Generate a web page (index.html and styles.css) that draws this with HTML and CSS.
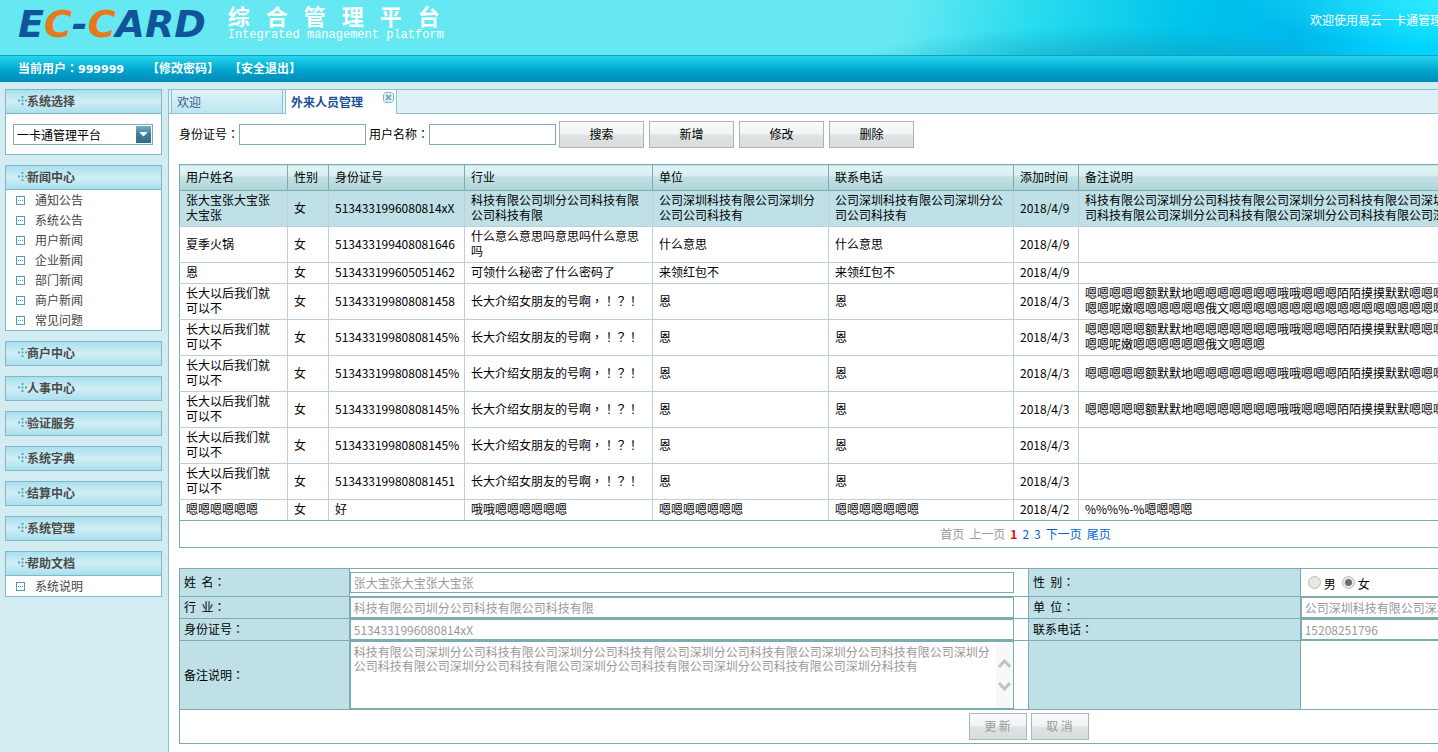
FILE: index.html
```
<!DOCTYPE html>
<html lang="zh-CN">
<head>
<meta charset="utf-8">
<title>综合管理平台</title>
<link rel="stylesheet" href="styles.css">
</head>
<body>
<svg class="defs" width="0" height="0" aria-hidden="true">
  <symbol id="dots" viewBox="0 0 9 9"><g fill="#5aa3b8"><rect x="3.500" y="0" width="2" height="2"/><rect x="3.500" y="3.500" width="2" height="2"/><rect x="3.500" y="7" width="2" height="2"/><rect x="0" y="3.500" width="2" height="2"/><rect x="7" y="3.500" width="2" height="2"/></g></symbol>
  <symbol id="leaf" viewBox="0 0 9 9"><rect x=".5" y=".5" width="8" height="8" fill="#fff" stroke="#4f9db5"/><path d="M2 4h1v1H2zM4 4h1v1H4zM6 4h1v1H6z" fill="#4f9db5"/></symbol>
</svg>
<div class="shell">
  <header class="banner">
    <div class="brand">
      <div class="logo"><span>E</span><span class="orange">C</span><span>-</span><span class="orange">C</span><span>ARD</span></div>
      <div class="product">
        <h1 class="product-name"><span>综</span><span>合</span><span>管</span><span>理</span><span>平</span><span>台</span></h1>
        <p class="product-sub">Integrated management platform</p>
      </div>
    </div>
    <div class="welcome">欢迎使用易云一卡通管理平台</div>
  </header>
  <nav class="userbar">
    <span class="user">当前用户<span class="tc" lang="zh-TW">：</span><span class="user-id">999999</span></span>
    <a href="#">【修改密码】</a>
    <a href="#">【安全退出】</a>
  </nav>
  <div class="layout">
    <aside class="side">
      <section class="panel">
        <h2 class="panel-title"><svg><use href="#dots"/></svg>系统选择</h2>
        <div class="picker">
          <div class="select-wrap">
            <select aria-label="系统选择"><option>一卡通管理平台</option></select>
            <svg class="arrow" width="15" height="17" viewBox="0 0 15 17"><defs><linearGradient id="ag" x2="0" y2="1"><stop offset="0" stop-color="#78adc0"/><stop offset=".5" stop-color="#3d7f9b"/><stop offset="1" stop-color="#2b6c8a"/></linearGradient></defs><rect width="15" height="17" fill="url(#ag)"/><path d="M4 6h7v1l-3.500 3.500L4 7z" fill="#fff"/></svg>
          </div>
        </div>
      </section>
      <section class="panel">
        <h2 class="panel-title"><svg><use href="#dots"/></svg>新闻中心</h2>
        <ul class="menu">
          <li><svg><use href="#leaf"/></svg><a href="#">通知公告</a></li>
          <li><svg><use href="#leaf"/></svg><a href="#">系统公告</a></li>
          <li><svg><use href="#leaf"/></svg><a href="#">用户新闻</a></li>
          <li><svg><use href="#leaf"/></svg><a href="#">企业新闻</a></li>
          <li><svg><use href="#leaf"/></svg><a href="#">部门新闻</a></li>
          <li><svg><use href="#leaf"/></svg><a href="#">商户新闻</a></li>
          <li><svg><use href="#leaf"/></svg><a href="#">常见问题</a></li>
        </ul>
      </section>
      <section class="panel"><h2 class="panel-title"><svg><use href="#dots"/></svg>商户中心</h2></section>
      <section class="panel"><h2 class="panel-title"><svg><use href="#dots"/></svg>人事中心</h2></section>
      <section class="panel"><h2 class="panel-title"><svg><use href="#dots"/></svg>验证服务</h2></section>
      <section class="panel"><h2 class="panel-title"><svg><use href="#dots"/></svg>系统字典</h2></section>
      <section class="panel"><h2 class="panel-title"><svg><use href="#dots"/></svg>结算中心</h2></section>
      <section class="panel"><h2 class="panel-title"><svg><use href="#dots"/></svg>系统管理</h2></section>
      <section class="panel">
        <h2 class="panel-title"><svg><use href="#dots"/></svg>帮助文档</h2>
        <ul class="menu"><li><svg><use href="#leaf"/></svg><a href="#">系统说明</a></li></ul>
      </section>
    </aside>
    <main class="main">
      <div class="tabs">
        <a class="tab" href="#">欢迎</a>
        <a class="tab active" href="#">外来人员管理
          <svg class="close" width="11" height="11" viewBox="0 0 11 11"><path d="M2.500 .5h6l2 2v6l-2 2h-6l-2-2v-6z" fill="#e4f3f7" stroke="#7fb3c2"/><path d="M3 3l5 5M8 3l-5 5" stroke="#7aafbf" stroke-width="2"/></svg>
        </a>
      </div>
      <div class="content">
        <form class="search">
          <label for="q-id">身份证号<span class="tc" lang="zh-TW">：</span></label><input id="q-id" type="text">
          <label class="second" for="q-name">用户名称<span class="tc" lang="zh-TW">：</span></label><input id="q-name" type="text">
          <div class="actions">
            <button type="button">搜索</button>
            <button type="button">新增</button>
            <button type="button">修改</button>
            <button type="button">删除</button>
          </div>
        </form>
        <table class="grid">
          <colgroup><col class="w-name"><col class="w-sex"><col class="w-id"><col class="w-trade"><col class="w-unit"><col class="w-phone"><col class="w-date"><col></colgroup>
          <thead><tr><th>用户姓名</th><th>性别</th><th>身份证号</th><th>行业</th><th>单位</th><th>联系电话</th><th>添加时间</th><th>备注说明</th></tr></thead>
          <tbody>
            <tr class="selected"><td>张大宝张大宝张大宝张</td><td>女</td><td>5134331996080814xX</td><td>科技有限公司圳分公司科技有限公司科技有限</td><td>公司深圳科技有限公司深圳分公司公司科技有</td><td>公司深圳科技有限公司深圳分公司公司科技有</td><td>2018/4/9</td><td>科技有限公司深圳分公司科技有限公司深圳分公司科技有限公司深圳分公司科技有限公司深圳分公司科技有限公司深圳分公司科技有限公司深圳分公司科技有限公司深圳分公司科技有限公司深圳分公司科技有限公司深圳分科技有</td></tr>
            <tr><td>夏季火锅</td><td>女</td><td>513433199408081646</td><td>什么意么意思吗意思吗什么意思吗</td><td>什么意思</td><td>什么意思</td><td>2018/4/9</td><td></td></tr>
            <tr><td>恩</td><td>女</td><td>513433199605051462</td><td>可领什么秘密了什么密码了</td><td>来领红包不</td><td>来领红包不</td><td>2018/4/9</td><td></td></tr>
            <tr><td>长大以后我们就可以不</td><td>女</td><td>513433199808081458</td><td>长大介绍女朋友的号啊<span class="tc" lang="zh-TW">，！？！</span></td><td>恩</td><td>恩</td><td>2018/4/3</td><td>嗯嗯嗯嗯嗯额默默地嗯嗯嗯嗯嗯嗯嗯哦哦嗯嗯嗯陌陌摸摸默默嗯嗯嗯嗯嗯嗯嗯嗯嗯嗯嗯嗯嗯嗯嗯嗯嗯嗯嗯嗯嗯嗯嗯嗯嗯嗯嗯嗯嗯嗯嗯嗯嗯嗯嗯嗯嗯嗯<wbr>嗯嗯呢嫩嗯嗯嗯嗯嗯嗯俄文嗯嗯嗯嗯嗯嗯嗯嗯嗯嗯嗯嗯嗯嗯嗯嗯嗯嗯嗯嗯嗯嗯嗯嗯</td></tr>
            <tr><td>长大以后我们就可以不</td><td>女</td><td>51343319980808145%</td><td>长大介绍女朋友的号啊<span class="tc" lang="zh-TW">，！？！</span></td><td>恩</td><td>恩</td><td>2018/4/3</td><td>嗯嗯嗯嗯嗯额默默地嗯嗯嗯嗯嗯嗯嗯哦哦嗯嗯嗯陌陌摸摸默默嗯嗯嗯嗯嗯嗯嗯嗯嗯嗯嗯嗯嗯嗯嗯嗯嗯嗯嗯嗯嗯嗯嗯嗯嗯嗯嗯嗯嗯嗯嗯嗯嗯嗯嗯嗯嗯嗯<wbr>嗯嗯呢嫩嗯嗯嗯嗯嗯嗯俄文嗯嗯嗯</td></tr>
            <tr><td>长大以后我们就可以不</td><td>女</td><td>51343319980808145%</td><td>长大介绍女朋友的号啊<span class="tc" lang="zh-TW">，！？！</span></td><td>恩</td><td>恩</td><td>2018/4/3</td><td>嗯嗯嗯嗯嗯额默默地嗯嗯嗯嗯嗯嗯嗯哦哦嗯嗯嗯陌陌摸摸默默嗯嗯嗯嗯嗯</td></tr>
            <tr><td>长大以后我们就可以不</td><td>女</td><td>51343319980808145%</td><td>长大介绍女朋友的号啊<span class="tc" lang="zh-TW">，！？！</span></td><td>恩</td><td>恩</td><td>2018/4/3</td><td>嗯嗯嗯嗯嗯额默默地嗯嗯嗯嗯嗯嗯嗯哦哦嗯嗯嗯陌陌摸摸默默嗯嗯嗯嗯嗯</td></tr>
            <tr><td>长大以后我们就可以不</td><td>女</td><td>51343319980808145%</td><td>长大介绍女朋友的号啊<span class="tc" lang="zh-TW">，！？！</span></td><td>恩</td><td>恩</td><td>2018/4/3</td><td></td></tr>
            <tr><td>长大以后我们就可以不</td><td>女</td><td>513433199808081451</td><td>长大介绍女朋友的号啊<span class="tc" lang="zh-TW">，！？！</span></td><td>恩</td><td>恩</td><td>2018/4/3</td><td></td></tr>
            <tr><td>嗯嗯嗯嗯嗯嗯</td><td>女</td><td>好</td><td>哦哦嗯嗯嗯嗯嗯嗯</td><td>嗯嗯嗯嗯嗯嗯嗯</td><td>嗯嗯嗯嗯嗯嗯嗯</td><td>2018/4/2</td><td>%%%%-%嗯嗯嗯嗯</td></tr>
          </tbody>
        </table>
        <div class="pager">
          <span class="off">首页</span><span class="off">上一页</span><b>1</b><a href="#">2</a><a href="#">3</a><a href="#">下一页</a><a href="#">尾页</a>
        </div>
        <form>
          <table class="detail">
            <colgroup><col class="d-label"><col class="d-field"><col class="d-label2"><col></colgroup>
            <tbody>
              <tr class="roomy">
                <th><label for="f-name">姓&nbsp;&nbsp;名<span class="tc" lang="zh-TW">：</span></label></th>
                <td><input class="field" id="f-name" type="text" value="张大宝张大宝张大宝张" disabled></td>
                <th>性&nbsp;&nbsp;别<span class="tc" lang="zh-TW">：</span></th>
                <td><div class="radios"><input id="m" type="radio" name="sex" disabled><label for="m">男</label><input id="f" type="radio" name="sex" checked disabled><label for="f">女</label></div></td>
              </tr>
              <tr>
                <th><label for="f-trade">行&nbsp;&nbsp;业<span class="tc" lang="zh-TW">：</span></label></th>
                <td><input class="field" id="f-trade" type="text" value="科技有限公司圳分公司科技有限公司科技有限" disabled></td>
                <th><label for="f-unit">单&nbsp;&nbsp;位<span class="tc" lang="zh-TW">：</span></label></th>
                <td><input class="field" id="f-unit" type="text" value="公司深圳科技有限公司深圳分公司公司科技有" disabled></td>
              </tr>
              <tr>
                <th><label for="f-id">身份证号<span class="tc" lang="zh-TW">：</span></label></th>
                <td><input class="field" id="f-id" type="text" value="5134331996080814xX" disabled></td>
                <th><label for="f-phone">联系电话<span class="tc" lang="zh-TW">：</span></label></th>
                <td><input class="field" id="f-phone" type="text" value="15208251796" disabled></td>
              </tr>
              <tr>
                <th><label for="f-note">备注说明<span class="tc" lang="zh-TW">：</span></label></th>
                <td>
                  <div class="note">
                    <textarea id="f-note" disabled>科技有限公司深圳分公司科技有限公司深圳分公司科技有限公司深圳分公司科技有限公司深圳分公司科技有限公司深圳分公司科技有限公司深圳分公司科技有限公司深圳分公司科技有限公司深圳分公司科技有限公司深圳分科技有</textarea>
                    <div class="scroller"><svg width="13" height="34" viewBox="0 0 13 34" fill="none" stroke="#c1c1c1" stroke-width="3"><path d="M1 9l5.500-6L12 9M1 25l5.500 6L12 25"/></svg></div>
                  </div>
                </td>
                <th></th>
                <td></td>
              </tr>
              <tr>
                <td class="foot" colspan="4"><div class="foot-actions"><button type="button" disabled>更 新</button><button type="button" disabled>取 消</button></div></td>
              </tr>
            </tbody>
          </table>
        </form>
      </div>
    </main>
  </div>
</div>
</body>
</html>
```
FILE: styles.css
```
* { box-sizing: border-box; }
html { overflow: hidden; }
body {
  margin: 0;
  font: 12px/15px "Noto Sans CJK SC", sans-serif;
  color: #000;
  background: #d3ecf1;
}
input, select, textarea, button { font: inherit; color: inherit; margin: 0; }
h1, h2, p, ul { margin: 0; padding: 0; }
a { color: inherit; text-decoration: none; }
.defs { display: block; position: absolute; }
.tc { font-family: "Noto Sans CJK TC", sans-serif; }
.shell { min-width: 1888px; min-height: 100vh; display: flex; flex-direction: column; }

.banner {
  display: flex;
  justify-content: space-between;
  height: 55px;
  padding: 0 422px 0 18px;
  color: #fff;
  background:
    radial-gradient(ellipse 240px 50px at 1480px 0, rgba(60, 240, 255, .9), rgba(0, 220, 255, 0)),
    radial-gradient(ellipse 260px 34px at 1120px 60px, rgba(20, 160, 190, .7), rgba(20, 160, 190, 0)),
    linear-gradient(100deg, #66e8f2 890px, #28dcee 1020px, #00c4ea 1170px, #00b8ee 1280px, #00d4ff 1400px);
}
.brand { display: flex; gap: 22px; }
.logo {
  font: italic bold 38px/48px "DejaVu Sans", sans-serif;
  color: #10559a;
}
.orange { color: #e8791a; }
.product { padding-top: 3px; }
.product-name {
  display: flex;
  gap: 16px;
  font: bold 22px/25px "Noto Sans CJK SC", sans-serif;
}
.product-sub { font: 12px/14px "Liberation Mono", monospace; }
.welcome { padding-top: 12px; white-space: nowrap; }

.userbar {
  display: flex;
  height: 27px;
  padding: 4px 18px;
  color: #fff;
  font-weight: bold;
  border-top: 1px solid #14a0bf;
  background: linear-gradient(#26d6ee, #00a4cc 55%, #008bb8);
}
.userbar a { margin-right: 10px; }
.user { margin-right: 23px; }
.user-id { font-family: "DejaVu Sans", sans-serif; font-size: 11px; }

.layout { display: flex; flex: 1; padding-top: 7px; }
.side {
  display: flex;
  flex-direction: column;
  gap: 10px;
  width: 157px;
  margin: 0 6px 0 5px;
}
.panel { border: 1px solid #7fb8c8; background: #fff; }
.panel-title {
  display: flex;
  align-items: center;
  height: 23px;
  padding: 0 0 2px 12px;
  font-size: 12px;
  color: #4a4a4a;
  background: linear-gradient(#a9e0ee, #d0eef4 50%, #a9e0ee);
}
.panel-title svg, .menu svg { width: 9px; height: 9px; }
.picker { padding: 10px 8px 9px 7px; border-top: 1px solid #7fb8c8; }
.select-wrap { position: relative; }
.select-wrap select {
  display: block;
  width: 100%;
  height: 21px;
  padding: 0 3px;
  appearance: none;
  border: 1px solid #7cabb0;
  border-radius: 0;
  background: #fff;
}
.arrow { position: absolute; right: 2px; top: 2px; pointer-events: none; }
.menu { list-style: none; border-top: 1px solid #7fb8c8; color: #444; }
.menu li {
  display: flex;
  align-items: center;
  gap: 10px;
  height: 20px;
  padding-left: 10px;
}
.menu a { padding-bottom: 2px; }

.main {
  flex: 1;
  min-width: 0;
  border: 1px solid #8fc0cc;
  border-width: 1px 0 0 1px;
  background: #fff;
}
.tabs {
  display: flex;
  gap: 2px;
  height: 24px;
  padding-left: 2px;
  border-bottom: 1px solid #8fc0cc;
  background: #dff1f8;
}
.tab {
  width: 112px;
  padding: 4px 5px;
  color: #31608f;
  border: solid #8fc0cc;
  border-width: 0 1px;
  background: linear-gradient(#def3f8, #bde6f0);
}
.tab.active {
  position: relative;
  height: 24px;
  font-weight: bold;
  color: #1d4f94;
  background: #fff;
}
.close { position: absolute; top: 2px; right: 2px; }

.content { padding: 7px 10px; }
.search { display: flex; align-items: center; height: 27px; }
.search label { padding-bottom: 2px; }
.search input {
  width: 127px;
  height: 21px;
  padding: 0 3px;
  border: 1px solid #7cabb0;
}
.second { margin-left: 3px; }
.actions { display: flex; gap: 5px; margin-left: 3px; }
button {
  height: 27px;
  padding: 0 0 3px;
  border: 1px solid #abb5b7;
  background: linear-gradient(#fafbfb, #f2f5f5 45%, #dde2e3 55%, #d9dddd);
}
.actions button { width: 85px; }

.grid, .detail { width: 100%; table-layout: fixed; border-collapse: collapse; }
.grid { margin-top: 16px; border: 1px solid #7cabb0; }
.w-name { width: 108px; }
.w-sex { width: 41px; }
.w-id { width: 136px; }
.w-trade { width: 188px; }
.w-unit { width: 176px; }
.w-phone { width: 185px; }
.w-date { width: 65px; }
.grid th {
  height: 26px;
  padding: 0 6px 2px;
  font-weight: normal;
  text-align: left;
  white-space: nowrap;
  border: 1px solid #7cabb0;
  background: linear-gradient(#dff3f5, #d8eff1 40%, #c4e2e5 45%, #b0d4d8);
}
.grid td { padding: 1px 6px 4px; border: 1px solid #bdd0d6; overflow: hidden; }
.grid td:nth-child(3), .grid td:nth-child(7) { white-space: nowrap; }
.grid tr td:first-child { border-left-color: #7cabb0; }
.grid tr:last-child td { border-bottom-color: #7cabb0; }
.selected { background: #bee0e6; }
.pager {
  display: flex;
  justify-content: center;
  gap: 5px;
  padding: 5px 6px 6px 0;
  margin-bottom: 20px;
  border: 1px solid #7cabb0;
  border-top: 0;
  color: #06c;
}
.pager .off { color: #999; }
.pager b { color: #f00; }

.d-label { width: 10%; }
.d-field { width: 40%; }
.d-label2 { width: 16%; }
.detail th, .detail td { padding: 0; border: 1px solid #7cabb0; }
.detail th {
  padding: 0 4px 2px;
  font-weight: normal;
  text-align: left;
  background: #bee0e6;
}
.detail .roomy td { padding: 3px 0; }
.field, .note { display: block; width: 98%; }
.field {
  height: 21px;
  padding: 0 3px;
  color: #999;
  border: 1px solid #7cabb0;
  background: #fff;
}
.radios { display: flex; align-items: center; padding-left: 7px; }
.radios input {
  width: 13px;
  height: 13px;
  appearance: none;
  border: 1px solid #bcbcbc;
  border-radius: 50%;
  background: #e6e6e6;
}
.radios input:checked { background: radial-gradient(circle, #6e6e6e 3px, #e6e6e6 4px); }
.radios label { padding: 1px 6px 0 3px; }
.note { position: relative; }
.note textarea {
  display: block;
  width: 100%;
  height: 68px;
  padding: 3px 19px 0 3px;
  line-height: 14px;
  resize: none;
  overflow: hidden;
  color: #999;
  border: 1px solid #7cabb0;
  background: #fff;
}
.scroller {
  position: absolute;
  top: 1px;
  right: 1px;
  bottom: 1px;
  display: grid;
  place-items: center;
  width: 17px;
  background: #f8f8f8;
}
.foot-actions { display: flex; justify-content: center; gap: 4px; padding: 3px 0; }
.foot-actions button { width: 58px; color: #999; }
```
